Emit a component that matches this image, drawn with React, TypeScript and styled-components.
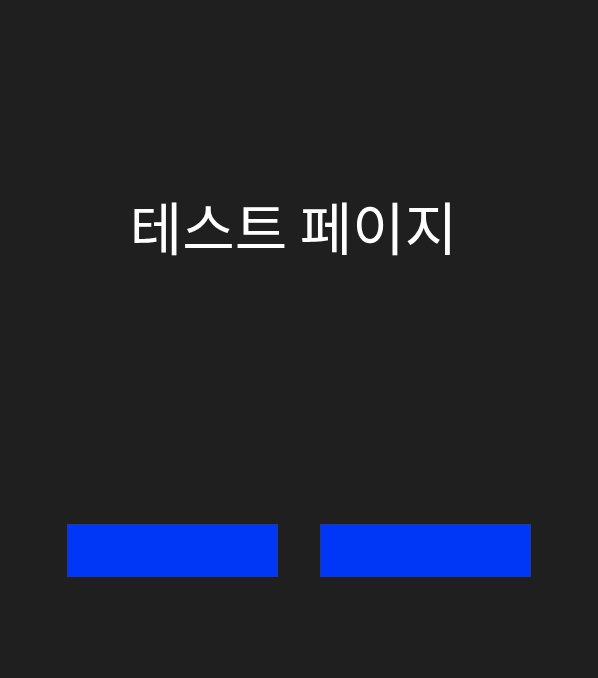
import React from "react";
import styled, { createGlobalStyle } from "styled-components";

const Global = createGlobalStyle`
  html, body { margin: 0; padding: 0; background: #1f1f1f; }
  body { font-family: "Noto Sans CJK KR", "Noto Sans", sans-serif; }
`;

const Page = styled.main`
  width: 598px;
  height: 678px;
  box-sizing: border-box;
  background: #1f1f1f;
  display: flex;
  flex-direction: column;
  align-items: center;
  padding-top: 185px;
`;

const Title = styled.h1`
  margin: 0;
  padding-right: 11px;
  color: #ffffff;
  font-family: "Noto Sans CJK KR", sans-serif;
  font-weight: 400;
  font-size: 57px;
  line-height: 80px;
  text-align: center;
`;

const ButtonRow = styled.div`
  display: flex;
  gap: 42px;
  margin-top: 259px;
`;

const Button = styled.button`
  width: 211px;
  height: 53px;
  box-sizing: border-box;
  background: #0037f6;
  border: 1px solid #1a3aa8;
  padding: 0;
  margin: 0;
  cursor: pointer;
`;

export default function App() {
  return (
    <>
      <Global />
      <Page>
        <Title>테스트 페이지</Title>
        <ButtonRow>
          <Button aria-label="button 1" />
          <Button aria-label="button 2" />
        </ButtonRow>
      </Page>
    </>
  );
}
